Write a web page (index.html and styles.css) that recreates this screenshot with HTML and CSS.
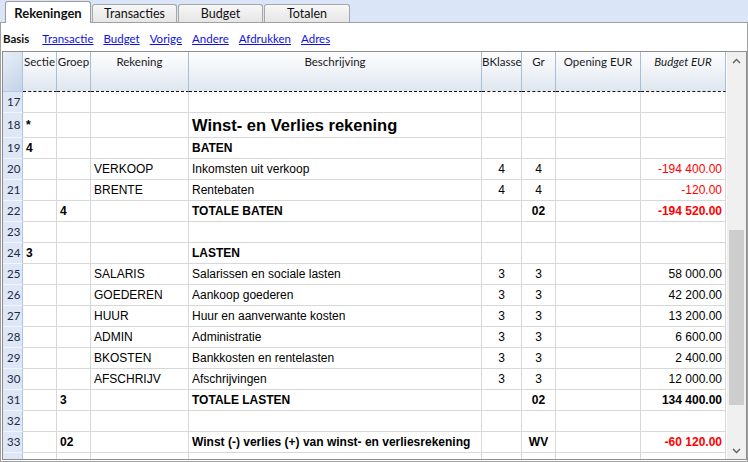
FILE: index.html
```html
<!DOCTYPE html>
<html>
<head>
<meta charset="utf-8">
<link rel="stylesheet" href="styles.css">
</head>
<body>
<div class="tabs">
  <div class="tab active">Rekeningen</div>
  <div class="tab">Transacties</div>
  <div class="tab">Budget</div>
  <div class="tab t4">Totalen</div>
</div>
<div class="panel">
  <div class="toolbar">
    <span class="cur">Basis</span>
    <a>Transactie</a>
    <a>Budget</a>
    <a>Vorige</a>
    <a>Andere</a>
    <a>Afdrukken</a>
    <a>Adres</a>
  </div>
  <div class="gridbox">
    <div class="grid">
      <div class="row head">
        <div class="h hn"></div>
        <div class="h">Sectie</div>
        <div class="h">Groep</div>
        <div class="h">Rekening</div>
        <div class="h">Beschrijving</div>
        <div class="h">BKlasse</div>
        <div class="h">Gr</div>
        <div class="h">Opening EUR</div>
        <div class="h i">Budget EUR</div>
      </div>
      <div class="row"><div class="n">17</div><div class="c"></div><div class="c"></div><div class="c"></div><div class="c"></div><div class="c"></div><div class="c"></div><div class="c"></div><div class="c"></div></div>
      <div class="row big"><div class="n">18</div><div class="c b">*</div><div class="c"></div><div class="c"></div><div class="c b title">Winst- en Verlies rekening</div><div class="c"></div><div class="c"></div><div class="c"></div><div class="c"></div></div>
      <div class="row"><div class="n">19</div><div class="c b">4</div><div class="c"></div><div class="c"></div><div class="c b">BATEN</div><div class="c"></div><div class="c"></div><div class="c"></div><div class="c"></div></div>
      <div class="row"><div class="n">20</div><div class="c"></div><div class="c"></div><div class="c">VERKOOP</div><div class="c">Inkomsten uit verkoop</div><div class="c ctr">4</div><div class="c ctr">4</div><div class="c"></div><div class="c rt neg">-194 400.00</div></div>
      <div class="row"><div class="n">21</div><div class="c"></div><div class="c"></div><div class="c">BRENTE</div><div class="c">Rentebaten</div><div class="c ctr">4</div><div class="c ctr">4</div><div class="c"></div><div class="c rt neg">-120.00</div></div>
      <div class="row"><div class="n">22</div><div class="c"></div><div class="c b">4</div><div class="c"></div><div class="c b">TOTALE BATEN</div><div class="c"></div><div class="c ctr b">02</div><div class="c"></div><div class="c rt neg b">-194 520.00</div></div>
      <div class="row"><div class="n">23</div><div class="c"></div><div class="c"></div><div class="c"></div><div class="c"></div><div class="c"></div><div class="c"></div><div class="c"></div><div class="c"></div></div>
      <div class="row"><div class="n">24</div><div class="c b">3</div><div class="c"></div><div class="c"></div><div class="c b">LASTEN</div><div class="c"></div><div class="c"></div><div class="c"></div><div class="c"></div></div>
      <div class="row"><div class="n">25</div><div class="c"></div><div class="c"></div><div class="c">SALARIS</div><div class="c">Salarissen en sociale lasten</div><div class="c ctr">3</div><div class="c ctr">3</div><div class="c"></div><div class="c rt">58 000.00</div></div>
      <div class="row"><div class="n">26</div><div class="c"></div><div class="c"></div><div class="c">GOEDEREN</div><div class="c">Aankoop goederen</div><div class="c ctr">3</div><div class="c ctr">3</div><div class="c"></div><div class="c rt">42 200.00</div></div>
      <div class="row"><div class="n">27</div><div class="c"></div><div class="c"></div><div class="c">HUUR</div><div class="c">Huur en aanverwante kosten</div><div class="c ctr">3</div><div class="c ctr">3</div><div class="c"></div><div class="c rt">13 200.00</div></div>
      <div class="row"><div class="n">28</div><div class="c"></div><div class="c"></div><div class="c">ADMIN</div><div class="c">Administratie</div><div class="c ctr">3</div><div class="c ctr">3</div><div class="c"></div><div class="c rt">6 600.00</div></div>
      <div class="row"><div class="n">29</div><div class="c"></div><div class="c"></div><div class="c">BKOSTEN</div><div class="c">Bankkosten en rentelasten</div><div class="c ctr">3</div><div class="c ctr">3</div><div class="c"></div><div class="c rt">2 400.00</div></div>
      <div class="row"><div class="n">30</div><div class="c"></div><div class="c"></div><div class="c">AFSCHRIJV</div><div class="c">Afschrijvingen</div><div class="c ctr">3</div><div class="c ctr">3</div><div class="c"></div><div class="c rt">12 000.00</div></div>
      <div class="row"><div class="n">31</div><div class="c"></div><div class="c b">3</div><div class="c"></div><div class="c b">TOTALE LASTEN</div><div class="c"></div><div class="c ctr b">02</div><div class="c"></div><div class="c rt b">134 400.00</div></div>
      <div class="row"><div class="n">32</div><div class="c"></div><div class="c"></div><div class="c"></div><div class="c"></div><div class="c"></div><div class="c"></div><div class="c"></div><div class="c"></div></div>
      <div class="row"><div class="n">33</div><div class="c"></div><div class="c b">02</div><div class="c"></div><div class="c b">Winst (-) verlies (+) van winst- en verliesrekening</div><div class="c"></div><div class="c ctr b">WV</div><div class="c"></div><div class="c rt neg b">-60 120.00</div></div>
      <div class="row"><div class="n"></div><div class="c"></div><div class="c"></div><div class="c"></div><div class="c"></div><div class="c"></div><div class="c"></div><div class="c"></div><div class="c"></div></div>
    </div>
    <div class="vscroll">
      <div class="sbtn"><svg width="9" height="6" viewBox="0 0 9 6"><polyline points="1,5 4.5,1.5 8,5" fill="none" stroke="#606060" stroke-width="1.4"/></svg></div>
      <div class="track"><div class="thumb"></div></div>
      <div class="sbtn"><svg width="9" height="6" viewBox="0 0 9 6"><polyline points="1,1 4.5,4.5 8,1" fill="none" stroke="#606060" stroke-width="1.4"/></svg></div>
    </div>
  </div>
</div>
</body>
</html>
```
FILE: styles.css
```css
* { box-sizing: border-box; }
html, body { margin: 0; padding: 0; background: #fff; }
body {
  width: 748px;
  height: 462px;
  overflow: hidden;
  font-family: Lato, "Noto Sans", sans-serif;
  color: #000;
}

.tabs {
  height: 22px;
  background: #dae6f7;
  display: flex;
  align-items: flex-end;
  gap: 1px;
  padding-left: 5px;
}
.tab {
  width: 85px;
  height: 18px;
  border: 1px solid #a7a7a7;
  border-bottom: none;
  border-radius: 3px 3px 0 0;
  background: linear-gradient(#f7f7f7, #e6e6e6);
  font-size: 12.5px;
  text-align: center;
  line-height: 18px;
  color: #111;
}
.tab.t4 { width: 86px; }
.tab.active {
  width: 86px;
  height: 22px;
  margin-bottom: -1px;
  position: relative;
  z-index: 1;
  background: #fff;
  border-color: #9c9c9c;
  font-weight: bold;
  font-size: 13px;
  line-height: 22px;
}

.panel {
  height: 440px;
  border: 1px solid #a0a0a0;
  background: #fff;
}
.toolbar {
  height: 28px;
  display: flex;
  align-items: center;
  gap: 10px;
  padding-left: 2px;
  padding-top: 2px;
  font-size: 11.5px;
}
.toolbar .cur { font-weight: bold; color: #111; margin-right: 3px; }
.toolbar a { color: #1010dd; text-decoration: underline; }

.gridbox {
  margin-left: 1px;
  width: 745px;
  height: 409px;
  border: 1px solid #8e8e8e;
  display: flex;
  gap: 1px;
  overflow: hidden;
}
.grid {
  width: 723px;
  flex: none;
}
.row {
  display: grid;
  grid-template-columns: 20px 34px 34px 98px 293px 40px 34px 85px 85px;
  height: 21px;
}
.row.big { height: 25px; }
.row.head { height: 40px; }

.h {
  border-right: 1px solid #a8bdd6;
  border-bottom: 1px dashed #111;
  background: linear-gradient(#fdfdfe, #f2f5f9 40%, #dfe6ef);
  text-align: center;
  padding-top: 3px;
  font-size: 11.5px;
  line-height: 14px;
  white-space: nowrap;
  overflow: hidden;
  color: #1a1a1a;
}
.h.i { font-style: italic; }
.h.hn {
  border-bottom: 1px solid #b7c8df;
  border-right: 1px solid #b2c4dc;
  background: linear-gradient(135deg, #e8eef8, #d2deef 60%, #c3d2e8);
}

.n {
  background: #dde7f5;
  border-right: 1px solid #b4c6de;
  border-bottom: 1px solid #f2f5fa;
  padding-left: 4px;
  font-size: 11.5px;
  line-height: 20px;
  color: #1b2a45;
}
.big .n { line-height: 24px; }

.c {
  border-right: 1px solid #d8d8d8;
  border-bottom: 1px solid #d8d8d8;
  padding: 0 3px;
  font-family: "Liberation Sans", Arial, sans-serif;
  font-size: 12px;
  line-height: 20px;
  white-space: nowrap;
  overflow: hidden;
}
.big .c { line-height: 24px; }
.c.b { font-weight: bold; }
.c.title { font-size: 16.5px; }
.c.ctr { text-align: center; }
.c.rt { text-align: right; }
.c.neg { color: #ff0000; }

.vscroll {
  width: 19px;
  flex: none;
  background: #f0f0f0;
  display: flex;
  flex-direction: column;
}
.sbtn {
  height: 17px;
  display: flex;
  align-items: center;
  justify-content: center;
}
.track { flex: 1; }
.thumb {
  margin-top: 161px;
  margin-left: 2px;
  width: 15px;
  height: 175px;
  background: #cdcdcd;
}
```
